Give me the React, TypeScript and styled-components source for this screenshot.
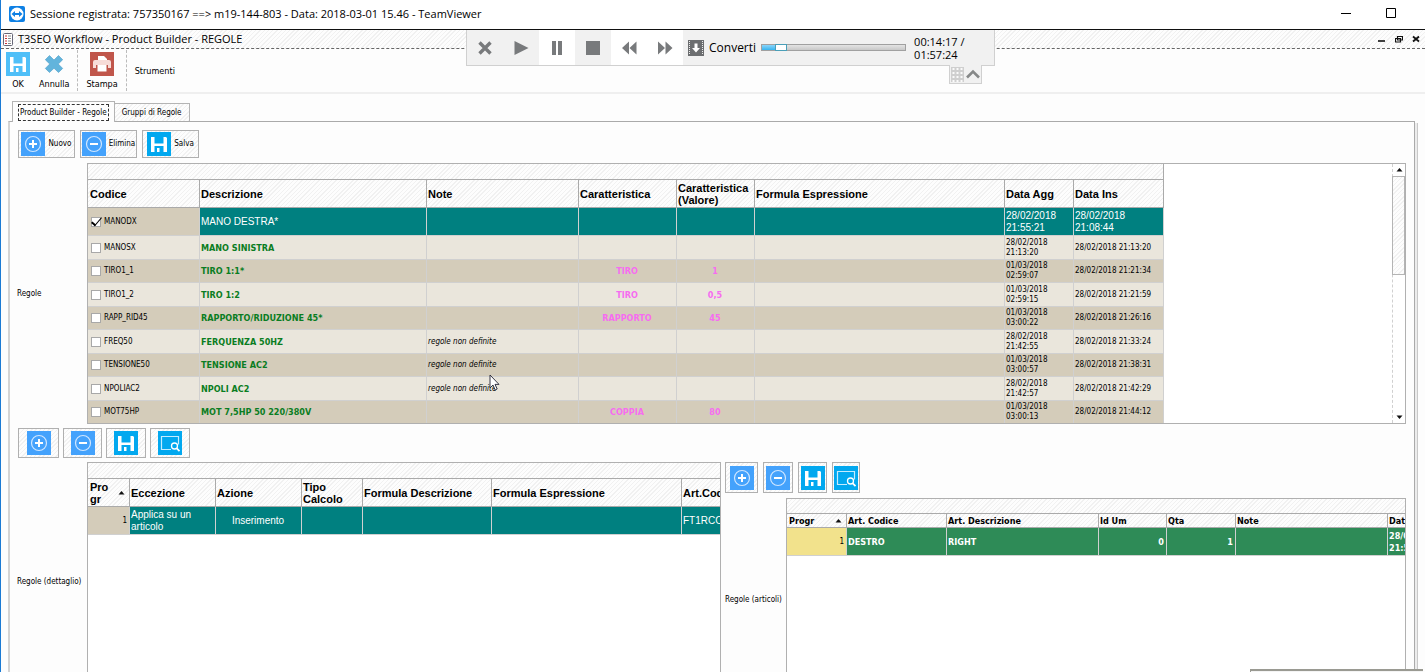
import React from "react";
import styled, { createGlobalStyle, css } from "styled-components";

const small = `"DejaVu Sans Condensed", "DejaVu Sans", sans-serif`;
const title = `"Open Sans", "Noto Sans", sans-serif`;
const arial = `"Liberation Sans", Arial, sans-serif`;

const hatch = css`
  background: repeating-linear-gradient(135deg, #f1f1f1 0 1px, #fdfdfd 1px 3px);
`;

const GlobalStyle = createGlobalStyle`
  * { box-sizing: border-box; }
  body { margin: 0; background: #fdfdfd; color: #000; overflow: hidden; }
  button { font: inherit; color: inherit; padding: 0; border: 0; background: none; }
`;

const Window = styled.div`
  position: relative;
  display: flex;
  flex-direction: column;
  height: 100vh;
  overflow: hidden;
  border-left: 1px solid #1a7ad4;
  font: 8px/10px ${small};
`;

const TitleBar = styled.header`
  display: flex;
  align-items: center;
  gap: 5px;
  flex: none;
  height: 30px;
  padding: 0 28px 2px 8px;
  background: #fff;
  border-bottom: 1px solid #111;
  font: 11px/16px ${title};
`;

const TitleText = styled.span`
  flex: 1;
`;

const WindowButtons = styled.div<{ $gap: number }>`
  display: flex;
  gap: ${(p) => p.$gap}px;
  align-items: center;

  button, svg { display: block; }
`;

const FormBar = styled.div`
  display: flex;
  align-items: center;
  gap: 4px;
  flex: none;
  height: 19px;
  padding: 0 5px 0 2px;
  border-bottom: 1px dashed #666;
  font: 11px/16px ${title};
  ${hatch}
`;

const Ribbon = styled.div`
  display: flex;
  flex: none;
  height: 45px;
  border-bottom: 2px solid #efefef;
  font-size: 9px;
`;

const RibbonGroup = styled.div`
  display: flex;
  align-items: flex-start;
  gap: 9px;
  margin: 1px 0;
  padding: 2px 8px 0;

  &:first-child {
    padding-left: 5px;
  }

  & + & {
    border-left: 1px dashed #bbb;
  }
`;

const RibbonButton = styled.button`
  display: flex;
  flex-direction: column;
  align-items: center;
  gap: 3px;
  min-width: 24px;
`;

const RibbonTitle = styled.span`
  align-self: center;
  padding-bottom: 2px;
`;

const TabStrip = styled.div`
  display: flex;
  align-items: flex-end;
  flex: none;
  height: 27px;
  padding-left: 11px;
`;

const Tab = styled.button<{ $active?: boolean }>`
  height: ${(p) => (p.$active ? 21 : 18)}px;
  padding: 0 5px;
  border: 1px solid #b4b4b4;
  border-bottom: 0;
  ${(p) =>
    p.$active
      ? css`
          position: relative;
          margin-bottom: -1px;
          background: #fdfdfd;
        `
      : css`
          border-left: 0;
          ${hatch}
        `}
`;

const FocusFrame = styled.span<{ $on?: boolean }>`
  display: block;
  padding: 3px 1px 2px;
  border: 1px ${(p) => (p.$on ? "dashed #333" : "solid transparent")};
`;

const Panel = styled.main`
  display: flex;
  flex-direction: column;
  flex: 1 0 auto;
  margin: 0 10px 0 7px;
  padding: 8px 8px 0 7px;
  border: solid #aaa;
  border-width: 1px 1px 0 2px;
  border-left-color: #d4d4d4;
  box-shadow: 2px 2px 0 #ececec, 3px 2px 0 #c8c8c8;
`;

const ButtonRow = styled.div<{ $gap: number; $before: number; $after: number }>`
  display: flex;
  gap: ${(p) => p.$gap}px;
  padding-left: ${(p) => p.$before}px;
  margin-bottom: ${(p) => p.$after}px;
`;

const ToolButton = styled.button<{ $width: number; $height: number }>`
  display: flex;
  align-items: center;
  justify-content: center;
  gap: 3px;
  width: ${(p) => p.$width}px;
  height: ${(p) => p.$height}px;
  border: 1px solid #b0b0b0;
  ${hatch}
`;

const Section = styled.section<{ $label: number; $after?: number }>`
  display: grid;
  grid-template-columns: ${(p) => p.$label}px minmax(0, 1fr);
  align-items: center;
  margin-bottom: ${(p) => p.$after ?? 0}px;
`;

const SectionLabel = styled.span`
  white-space: nowrap;
`;

const GridBox = styled.div<{ $fill?: boolean }>`
  position: relative;
  display: flex;
  justify-content: space-between;
  align-items: flex-start;
  overflow: hidden;
  border: 1px solid #b0b0b0;
  background: #fff;
  ${(p) => p.$fill && "align-self: stretch;"}
`;

const Table = styled.table<{ $width: number }>`
  flex: none;
  width: ${(p) => p.$width}px;
  margin-bottom: -1px;
  table-layout: fixed;
  border-collapse: separate;
  border-spacing: 0;
`;

const BandCell = styled.td<{ $height: number }>`
  height: ${(p) => p.$height}px;
  padding: 0;
  border: solid #aaa;
  border-width: 0 1px 1px 0;
  ${hatch}
`;

const HeadCell = styled.th<{ $compact?: boolean }>`
  height: ${(p) => (p.$compact ? 14 : 28)}px;
  padding: 0 2px 0 1px;
  border: solid #aaa;
  border-width: 0 1px 1px 0;
  text-align: left;
  font: ${(p) => (p.$compact ? `bold 9px/12px ${small}` : `bold 11px/12px ${arial}`)};
  ${hatch}

  &:first-child {
    padding-left: 2px;
  }
`;

const SortHead = styled.span`
  display: flex;
  align-items: center;
  justify-content: space-between;
  padding-right: 2px;
`;

type Tone = "teal" | "green" | "dark" | "light";
const tones: Record<Tone, string> = {
  teal: "#008080",
  green: "#2e8b57",
  dark: "#d4ccba",
  light: "#eae6dc",
};

const Row = styled.tr<{ $tone: Tone; $height: number }>`
  height: ${(p) => p.$height}px;
  background: ${(p) => tones[p.$tone]};
`;

const selectedText = css`
  color: #fff;
  font: 10px/12px ${arial};
`;

const Cell = styled.td<{
  $kind?: "selected" | "name" | "feature" | "note" | "boldSelected";
  $align?: "center" | "right";
  $fill?: string;
}>`
  padding: 0 2px 0 1px;
  border: solid #d0d0d0;
  border-width: 0 1px 1px 0;
  text-align: ${(p) => p.$align ?? "left"};
  ${(p) => p.$fill && `background: ${p.$fill};`}
  ${(p) => p.$kind === "selected" && selectedText}
  ${(p) => p.$kind === "name" && `color: #0a7d22; font: bold 9px/12px ${small};`}
  ${(p) => p.$kind === "feature" && `color: #f66cf0; font: bold 9px/12px ${small};`}
  ${(p) => p.$kind === "note" && "font-style: italic;"}
  ${(p) => p.$kind === "boldSelected" && `color: #fff; font: bold 9px/12px ${small};`}
`;

const CheckLabel = styled.label`
  display: flex;
  align-items: center;
  gap: 3px;
  padding-left: 2px;
`;

const Check = styled.input`
  appearance: none;
  display: grid;
  place-content: center;
  width: 10px;
  height: 10px;
  margin: 0;
  border: 1px solid #a8a8a8;
  background: #fff;

  &:checked::after {
    content: "";
    width: 4px;
    height: 9px;
    margin-bottom: 3px;
    border: solid #000;
    border-width: 0 1px 2px 0;
    transform: rotate(40deg);
  }
`;

const ScrollBar = styled.div`
  display: flex;
  flex-direction: column;
  align-self: stretch;
  justify-content: space-between;
  width: 13px;
  border-left: 1px dashed #d0d0d0;
`;

const ScrollButton = styled.button`
  display: grid;
  place-items: center;
  height: 12px;
`;

const ScrollThumb = styled.div`
  height: 99px;
  margin: 0 0 auto -1px;
  border: 1px solid #b4b4b4;
  ${hatch}
`;

const Details = styled.div`
  display: flex;
  gap: 4px;
  flex: 1 0 240px;
`;

const LeftDetail = styled(Section)`
  flex: 704 1 0;
  min-width: 0;
`;

const RightColumn = styled.div`
  display: flex;
  flex-direction: column;
  flex: 681 1 0;
  min-width: 0;
`;

const RightDetail = styled(Section)`
  flex: 1;
`;

const Player = styled.div`
  position: absolute;
  top: 30px;
  left: 465px;
  display: flex;
  align-items: center;
  width: 529px;
  height: 36px;
  border: solid #d0d0d0;
  border-width: 0 1px 1px 1px;
  background: #f1f1f1;
`;

const PlayerButton = styled.button<{ $light?: boolean }>`
  display: grid;
  place-items: center;
  width: 36px;
  height: 35px;
  background: ${(p) => (p.$light ? "#fff" : "#f1f1f1")};
`;

const Convert = styled.button`
  display: flex;
  align-items: center;
  gap: 5px;
  margin: 0 5px;
  font: 12px/16px ${title};
`;

const Progress = styled.div`
  display: flex;
  width: 145px;
  height: 7px;
  border: 1px solid #a0a0a0;
  background: linear-gradient(#e4e4e4, #c8c8c8);
`;

const Played = styled.div`
  width: 10%;
  background: linear-gradient(#8ad4fa, #38b4ee);
`;

const Knob = styled.div`
  width: 10px;
  background: #fff;
  outline: 1px solid #4a9fb8;
`;

const Time = styled.div`
  width: 60px;
  margin-left: 8px;
  font: 11px/13px ${title};
`;

const PlayerHandle = styled.div`
  position: absolute;
  top: 35px;
  right: 12px;
  display: flex;
  align-items: center;
  width: 33px;
  height: 19px;
  padding: 0 1px;
  gap: 2px;
  border: solid #d0d0d0;
  border-width: 0 1px 1px 1px;
  background: #f1f1f1;

  button, svg { display: block; }
`;

const Pointer = styled.svg`
  position: absolute;
  top: 210px;
  left: 401px;
`;

const CornerPopup = styled.div`
  position: absolute;
  right: 2px;
  bottom: 0;
  width: 173px;
  height: 3px;
  border: solid #9a9a92;
  border-width: 2px 0 0 1px;
  background: #f4f4f4;
`;

const PlusIcon = () => (
  <svg width="24" height="24" viewBox="0 0 24 24">
    <rect width="24" height="24" fill="#44a2fc" />
    <circle cx="12" cy="12" r="7.5" fill="none" stroke="#cfe6ff" strokeWidth="1.2" />
    <path d="M12 8v8M8 12h8" stroke="#fff" strokeWidth="2" />
  </svg>
);
const MinusIcon = () => (
  <svg width="24" height="24" viewBox="0 0 24 24">
    <rect width="24" height="24" fill="#44a2fc" />
    <circle cx="12" cy="12" r="7.5" fill="none" stroke="#cfe6ff" strokeWidth="1.2" />
    <path d="M8 12h8" stroke="#fff" strokeWidth="2" />
  </svg>
);
const DiskIcon = ({ bg = "#02a8ef" }: { bg?: string }) => (
  <svg width="24" height="24" viewBox="0 0 24 24">
    <rect width="24" height="24" fill={bg} />
    <path d="M4 5h3.500v6.500h9V5H19l1 1v14h-3.500v-6h-9v6H4z" fill="#fff" />
    <path d="M10 16h2.500v4H10z" fill="#fff" />
  </svg>
);
const FindIcon = () => (
  <svg width="24" height="24" viewBox="0 0 24 24">
    <rect width="24" height="24" fill="#02a8ef" />
    <path d="M13 18.500H3.500V5.500h17v8" fill="none" stroke="#c4ecff" strokeWidth="1.200" />
    <circle cx="16.500" cy="15" r="3" fill="none" stroke="#fff" strokeWidth="1.300" />
    <path d="M18.500 17.200 21.500 20.200" stroke="#fff" strokeWidth="1.800" />
  </svg>
);
const CancelIcon = () => (
  <svg width="24" height="24" viewBox="0 0 24 24">
    <path
      d="M7.500 3.500 12 8l4.500-4.500 4.200 4.200L16.300 12l4.400 4.400-4.200 4.100L12 16.200l-4.500 4.300-4.200-4.100L7.700 12 3.300 7.700z"
      fill="#62b4dc"
      stroke="#4a9cc8"
      strokeWidth=".6"
    />
  </svg>
);
const PrintIcon = () => (
  <svg width="24" height="24" viewBox="0 0 24 24">
    <rect width="24" height="24" fill="#c0564b" />
    <path d="M8 4h6l3 3v3H8z" fill="#fff" />
    <path d="M3 10q0-2 2-2h14q2 0 2 2v6h-3v-3H6v3H3z" fill="#f7dcd8" />
    <path d="M7.500 13h9v6.500h-9z" fill="#fff" />
  </svg>
);
const Triangle = ({ down }: { down?: boolean }) => (
  <svg width="7" height="4" viewBox="0 0 7 4">
    <path d={down ? "M0.500 0.500h6L3.500 4z" : "M0.500 3.500h6L3.500 0z"} fill="#111" />
  </svg>
);
const gray = "#787a7c";

type Rule = {
  code: string;
  name: string;
  note?: string;
  feature?: string;
  value?: string;
  updated: string;
  inserted: string;
};
const rules: Rule[] = [
  { code: "MANOSX", name: "MANO SINISTRA", updated: "28/02/2018 21:13:20", inserted: "28/02/2018 21:13:20" },
  { code: "TIRO1_1", name: "TIRO 1:1*", feature: "TIRO", value: "1", updated: "01/03/2018 02:59:07", inserted: "28/02/2018 21:21:34" },
  { code: "TIRO1_2", name: "TIRO 1:2", feature: "TIRO", value: "0,5", updated: "01/03/2018 02:59:15", inserted: "28/02/2018 21:21:59" },
  { code: "RAPP_RID45", name: "RAPPORTO/RIDUZIONE 45*", feature: "RAPPORTO", value: "45", updated: "01/03/2018 03:00:22", inserted: "28/02/2018 21:26:16" },
  { code: "FREQ50", name: "FERQUENZA 50HZ", note: "regole non definite", updated: "28/02/2018 21:42:55", inserted: "28/02/2018 21:33:24" },
  { code: "TENSIONE50", name: "TENSIONE AC2", note: "regole non definite", updated: "01/03/2018 03:00:57", inserted: "28/02/2018 21:38:31" },
  { code: "NPOLIAC2", name: "NPOLI AC2", note: "regole non definite", updated: "28/02/2018 21:42:57", inserted: "28/02/2018 21:42:29" },
  { code: "MOT75HP", name: "MOT 7,5HP 50 220/380V", feature: "COPPIA", value: "80", updated: "01/03/2018 03:00:13", inserted: "28/02/2018 21:44:12" },
];

const Columns = ({ widths }: { widths: number[] }) => (
  <colgroup>
    {widths.map((w, i) => (
      <col key={i} style={{ width: w }} />
    ))}
  </colgroup>
);
const ruleWidths = [112, 227, 152, 98, 78, 250, 69, 90];
const detailWidths = [42, 86, 86, 61, 129, 190, 90];
const articleWidths = [60, 100, 152, 68, 69, 152, 70];
const sum = (a: number[]) => a.reduce((x, y) => x + y, 0);

type IconButtonsProps = { widths: number[]; height: number; gap: number; before: number; after: number };
const IconButtons = ({ widths, height, gap, before, after }: IconButtonsProps) => (
  <ButtonRow $gap={gap} $before={before} $after={after}>
    <ToolButton $width={widths[0]} $height={height} aria-label="Nuovo"><PlusIcon /></ToolButton>
    <ToolButton $width={widths[1]} $height={height} aria-label="Elimina"><MinusIcon /></ToolButton>
    <ToolButton $width={widths[2]} $height={height} aria-label="Salva"><DiskIcon /></ToolButton>
    <ToolButton $width={widths[3]} $height={height} aria-label="Cerca"><FindIcon /></ToolButton>
  </ButtonRow>
);

const RulesGrid = () => (
  <GridBox>
    <Table $width={sum(ruleWidths)}>
      <Columns widths={ruleWidths} />
      <thead>
        <tr><BandCell $height={16} colSpan={8} /></tr>
        <tr>
          {["Codice", "Descrizione", "Note", "Caratteristica", "Caratteristica (Valore)", "Formula Espressione", "Data Agg", "Data Ins"].map((h) => (
            <HeadCell key={h}>{h}</HeadCell>
          ))}
        </tr>
      </thead>
      <tbody>
        <Row $tone="teal" $height={28}>
          <Cell $fill={tones.dark}>
            <CheckLabel><Check type="checkbox" defaultChecked />MANODX</CheckLabel>
          </Cell>
          <Cell $kind="selected">MANO DESTRA*</Cell>
          <Cell /><Cell /><Cell /><Cell />
          <Cell $kind="selected">28/02/2018 21:55:21</Cell>
          <Cell $kind="selected">28/02/2018 21:08:44</Cell>
        </Row>
        {rules.map((r, i) => (
          <Row key={r.code} $tone={i % 2 ? "dark" : "light"} $height={i % 2 ? 23 : 24}>
            <Cell><CheckLabel><Check type="checkbox" />{r.code}</CheckLabel></Cell>
            <Cell $kind="name">{r.name}</Cell>
            <Cell $kind="note">{r.note}</Cell>
            <Cell $kind="feature" $align="center">{r.feature}</Cell>
            <Cell $kind="feature" $align="center">{r.value}</Cell>
            <Cell />
            <Cell>{r.updated}</Cell>
            <Cell>{r.inserted}</Cell>
          </Row>
        ))}
      </tbody>
    </Table>
    <ScrollBar>
      <ScrollButton aria-label="Su"><Triangle /></ScrollButton>
      <ScrollThumb />
      <ScrollButton aria-label="Giù"><Triangle down /></ScrollButton>
    </ScrollBar>
    <Pointer width="12" height="18" viewBox="0 0 12 18">
      <path d="M1 1v13l3-3 2.200 5 2-1-2.200-4.600H10z" fill="#fff" stroke="#223" strokeWidth=".9" />
    </Pointer>
  </GridBox>
);

const DetailGrid = () => (
  <GridBox $fill>
    <Table $width={sum(detailWidths)}>
      <Columns widths={detailWidths} />
      <thead>
        <tr><BandCell $height={16} colSpan={7} /></tr>
        <tr>
          <HeadCell><SortHead><span>Pro<br />gr</span><Triangle /></SortHead></HeadCell>
          {["Eccezione", "Azione", "Tipo Calcolo", "Formula Descrizione", "Formula Espressione", "Art.Codice"].map((h) => (
            <HeadCell key={h}>{h}</HeadCell>
          ))}
        </tr>
      </thead>
      <tbody>
        <Row $tone="teal" $height={28}>
          <Cell $fill={tones.dark} $align="right">1</Cell>
          <Cell $kind="selected">Applica su un articolo</Cell>
          <Cell $kind="selected" $align="center">Inserimento</Cell>
          <Cell /><Cell /><Cell />
          <Cell $kind="selected">FT1RCC</Cell>
        </Row>
      </tbody>
    </Table>
  </GridBox>
);

const ArticleGrid = () => (
  <GridBox $fill>
    <Table $width={sum(articleWidths)}>
      <Columns widths={articleWidths} />
      <thead>
        <tr><BandCell $height={15} colSpan={7} /></tr>
        <tr>
          <HeadCell $compact><SortHead>Progr<Triangle /></SortHead></HeadCell>
          {["Art. Codice", "Art. Descrizione", "Id Um", "Qta", "Note", "Data Agg"].map((h) => (
            <HeadCell $compact key={h}>{h}</HeadCell>
          ))}
        </tr>
      </thead>
      <tbody>
        <Row $tone="green" $height={28}>
          <Cell $fill="#f2e28c" $align="right">1</Cell>
          <Cell $kind="boldSelected">DESTRO</Cell>
          <Cell $kind="boldSelected">RIGHT</Cell>
          <Cell $kind="boldSelected" $align="right">0</Cell>
          <Cell $kind="boldSelected" $align="right">1</Cell>
          <Cell />
          <Cell $kind="boldSelected">28/02/2018 21:55:21</Cell>
        </Row>
      </tbody>
    </Table>
  </GridBox>
);

const PlayerBar = () => (
  <Player>
    <PlayerButton aria-label="Chiudi">
      <svg width="16" height="16" viewBox="0 0 16 16"><path d="M2.500 2.500 13.500 13.500M13.500 2.500 2.500 13.500" stroke={gray} strokeWidth="3.400" /></svg>
    </PlayerButton>
    <PlayerButton aria-label="Riproduci">
      <svg width="16" height="16" viewBox="0 0 16 16"><path d="M1.500 1v14L15.500 8z" fill={gray} /></svg>
    </PlayerButton>
    <PlayerButton $light aria-label="Pausa">
      <svg width="16" height="16" viewBox="0 0 16 16"><path d="M3 1h4v14H3zM9 1h4v14H9z" fill={gray} /></svg>
    </PlayerButton>
    <PlayerButton aria-label="Ferma">
      <svg width="16" height="16" viewBox="0 0 16 16"><path d="M1 1h14v14H1z" fill={gray} /></svg>
    </PlayerButton>
    <PlayerButton $light aria-label="Indietro">
      <svg width="16" height="16" viewBox="0 0 16 16"><path d="M8 1.500v13L1 8zM15.500 1.500v13L8.500 8z" fill={gray} /></svg>
    </PlayerButton>
    <PlayerButton $light aria-label="Avanti">
      <svg width="16" height="16" viewBox="0 0 16 16"><path d="M1 1.500v13L8 8zM8.500 1.500v13L15.500 8z" fill={gray} /></svg>
    </PlayerButton>
    <Convert>
      <svg width="16" height="16" viewBox="0 0 16 16">
        <path d="M0 0h16v16H0z" fill="#6c6e70" />
        <path d="M1.500 1v14M14.500 1v14" stroke="#eee" strokeDasharray="1 1" />
        <path d="M6.500 3.500h3V8H12l-4 4.500L4 8h2.500z" fill="#fff" />
      </svg>
      Converti
    </Convert>
    <Progress role="progressbar" aria-label="Avanzamento" aria-valuenow={12}>
      <Played />
      <Knob />
    </Progress>
    <Time>00:14:17 / 01:57:24</Time>
    <PlayerHandle>
      <svg width="13" height="15" viewBox="0 0 13 15">
        <path d="M0 0h13v15H0z" fill="#cfcfcf" />
        <path d="M2.500 0v15M6.500 0v15M10.500 0v15" stroke="#fafafa" strokeWidth="2" strokeDasharray="2 2" strokeDashoffset="-1" />
      </svg>
      <button aria-label="Comprimi">
        <svg width="14" height="10" viewBox="0 0 14 10"><path d="M1 8.500 7 2.500 13 8.500" fill="none" stroke="#868888" strokeWidth="2.600" /></svg>
      </button>
    </PlayerHandle>
  </Player>
);

export default function App() {
  return (
    <Window>
      <GlobalStyle />
      <TitleBar>
        <svg width="16" height="16" viewBox="0 0 16 16">
          <rect width="16" height="16" rx="2" fill="#0e80e4" />
          <circle cx="8" cy="8" r="6.500" fill="#fff" />
          <path d="M2.500 8 6 5v2h4V5l3.500 3L10 11V9H6v2z" fill="#0e80e4" />
        </svg>
        <TitleText>Sessione registrata: 757350167 ==&gt; m19-144-803 - Data: 2018-03-01 15.46 - TeamViewer</TitleText>
        <WindowButtons $gap={34}>
          <button aria-label="Riduci a icona">
            <svg width="11" height="11" viewBox="0 0 11 11"><path d="M0 5.500h10" stroke="#000" /></svg>
          </button>
          <button aria-label="Ingrandisci">
            <svg width="11" height="11" viewBox="0 0 11 11"><path d="M.5.500h9v9h-9z" fill="none" stroke="#000" /></svg>
          </button>
        </WindowButtons>
      </TitleBar>
      <FormBar>
        <svg width="11" height="13" viewBox="0 0 11 13">
          <rect x=".5" y=".5" width="9" height="12" rx="1" fill="#fff" stroke="#667" />
          <path d="M2 3h2M2 5.500h2M2 8h2M2 10.500h2" stroke="#c33" />
          <path d="M5 3h3M5 5.500h3M5 8h3M5 10.500h3" stroke="#888" />
        </svg>
        <TitleText>T3SEO Workflow - Product Builder - REGOLE</TitleText>
        <WindowButtons $gap={9}>
          <button aria-label="Riduci">
            <svg width="8" height="8" viewBox="0 0 8 8"><path d="M0 6h7" stroke="#111" strokeWidth="1.600" /></svg>
          </button>
          <button aria-label="Ripristina">
            <svg width="8" height="8" viewBox="0 0 8 8"><path d="M2.500 1.500h5v3.500h-5zM.5 3.500h5V7h-5z" fill="#fff" stroke="#111" strokeWidth="1.200" /></svg>
          </button>
          <button aria-label="Chiudi">
            <svg width="8" height="8" viewBox="0 0 8 8"><path d="M1 1.500 7 6.500M7 1.500 1 6.500" stroke="#111" strokeWidth="1.800" /></svg>
          </button>
        </WindowButtons>
      </FormBar>
      <Ribbon>
        <RibbonGroup>
          <RibbonButton><DiskIcon bg="#4fbff8" />OK</RibbonButton>
          <RibbonButton><CancelIcon />Annulla</RibbonButton>
        </RibbonGroup>
        <RibbonGroup>
          <RibbonButton><PrintIcon />Stampa</RibbonButton>
        </RibbonGroup>
        <RibbonGroup>
          <RibbonTitle>Strumenti</RibbonTitle>
        </RibbonGroup>
      </Ribbon>
      <TabStrip role="tablist">
        <Tab $active role="tab" aria-selected><FocusFrame $on>Product Builder - Regole</FocusFrame></Tab>
        <Tab role="tab" aria-selected={false}><FocusFrame>Gruppi di Regole</FocusFrame></Tab>
      </TabStrip>
      <Panel>
        <ButtonRow $gap={5} $before={1} $after={5}>
          <ToolButton $width={57} $height={28}><PlusIcon />Nuovo</ToolButton>
          <ToolButton $width={57} $height={28}><MinusIcon />Elimina</ToolButton>
          <ToolButton $width={57} $height={28}><DiskIcon />Salva</ToolButton>
        </ButtonRow>
        <Section $label={70} $after={4}>
          <SectionLabel>Regole</SectionLabel>
          <RulesGrid />
        </Section>
        <IconButtons widths={[41, 39, 40, 40]} height={30} gap={4} before={1} after={4} />
        <Details>
          <LeftDetail $label={70}>
            <SectionLabel>Regole (dettaglio)</SectionLabel>
            <DetailGrid />
          </LeftDetail>
          <RightColumn>
            <IconButtons widths={[33, 30, 29, 28]} height={31} gap={5} before={0} after={5} />
            <RightDetail $label={61}>
              <SectionLabel>Regole (articoli)</SectionLabel>
              <ArticleGrid />
            </RightDetail>
          </RightColumn>
        </Details>
      </Panel>
      <PlayerBar />
      <CornerPopup />
    </Window>
  );
}
